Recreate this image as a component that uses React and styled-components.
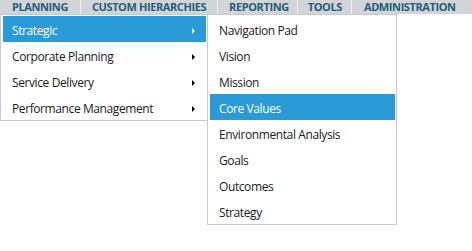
import React from "react";
import styled, { createGlobalStyle } from "styled-components";

const Global = createGlobalStyle`
  html, body { margin: 0; padding: 0; background: #ffffff; }
  body { font-family: "Open Sans", "Noto Sans", sans-serif; }
`;

const Page = styled.div`
  position: relative;
  width: 472px;
  height: 251px;
  overflow: hidden;
  background: #ffffff;
`;

const MenuBar = styled.nav`
  display: flex;
  align-items: stretch;
  height: 14px;
  background: #d1d5d7;
  padding-left: 1px;
`;

const TopItem = styled.div`
  display: flex;
  align-items: center;
  padding: 0 ${(p) => p.$right}px 0 ${(p) => p.$left}px;
  font-family: "Open Sans", "Noto Sans", sans-serif;
  font-weight: 700;
  font-size: 11px;
  letter-spacing: -0.4px;
  line-height: 14px;
  color: #245b7e;
  white-space: nowrap;
  & + & {
    border-left: 1px solid #eef0f1;
  }
`;

const Menus = styled.div`
  position: absolute;
  top: 14px;
  left: 0;
  display: flex;
  align-items: flex-start;
`;

const Menu = styled.ul`
  list-style: none;
  margin: 0 0 0 ${(p) => p.$overlap || 0}px;
  padding: 1px 1px 0 2px;
  width: ${(p) => p.$width}px;
  box-sizing: border-box;
  background: #ffffff;
  border: 1px solid #c9c9c9;
`;

const Item = styled.li`
  display: flex;
  align-items: center;
  justify-content: space-between;
  height: 26px;
  padding: 0 11px 0 9px;
  font-family: "Open Sans", "Noto Sans", sans-serif;
  font-size: 12px;
  letter-spacing: -0.4px;
  color: ${(p) => (p.$active ? "#ffffff" : "#1a1a1a")};
  background: ${(p) => (p.$active ? "#2a9bd7" : "transparent")};
  white-space: nowrap;
`;

const Label = styled.span`
  padding-top: 2px;
`;

const Arrow = styled.span`
  width: 0;
  height: 0;
  border-top: 3px solid transparent;
  border-bottom: 3px solid transparent;
  border-left: 3px solid ${(p) => (p.$active ? "#ffffff" : "#000000")};
  margin-top: 3px;
`;

const top = [
  { label: "PLANNING", left: 11, right: 12 },
  { label: "CUSTOM HIERARCHIES", left: 11, right: 11 },
  { label: "REPORTING", left: 11, right: 8 },
  { label: "TOOLS", left: 10, right: 9 },
  { label: "ADMINISTRATION", left: 12, right: 10 },
];

const main = ["Strategic", "Corporate Planning", "Service Delivery", "Performance Management"];
const sub = [
  "Navigation Pad",
  "Vision",
  "Mission",
  "Core Values",
  "Environmental Analysis",
  "Goals",
  "Outcomes",
  "Strategy",
];

export default function App() {
  return (
    <Page>
      <Global />
      <MenuBar>
        {top.map((t) => (
          <TopItem key={t.label} $left={t.left} $right={t.right}>
            {t.label}
          </TopItem>
        ))}
      </MenuBar>
      <Menus>
        <Menu $width={208}>
          {main.map((m, i) => (
            <Item key={m} $active={i === 0}>
              <Label>{m}</Label>
              <Arrow $active={i === 0} />
            </Item>
          ))}
        </Menu>
        <Menu $width={190} $overlap={-1}>
          {sub.map((s) => (
            <Item key={s} $active={s === "Core Values"}>
              <Label>{s}</Label>
            </Item>
          ))}
        </Menu>
      </Menus>
    </Page>
  );
}
